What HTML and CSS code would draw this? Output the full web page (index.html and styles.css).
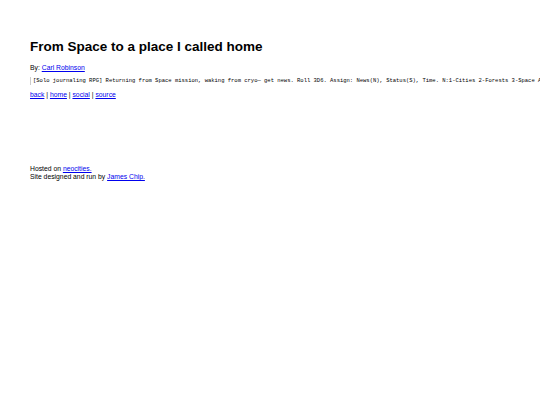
FILE: index.html
```html
<!DOCTYPE html>
<html>
<head>
<meta charset="utf-8">
<link rel="stylesheet" href="styles.css">
</head>
<body>
<main class="page">
  <h1 class="title">From Space to a place I called home</h1>
  <p class="byline">By: <a href="#">Carl Robinson</a></p>
  <pre class="desc">[Solo journaling RPG] Returning from Space mission, waking from cryo— get news. Roll 3D6. Assign: News(N), Status(S), Time. N:1-Cities 2-Forests 3-Space A</pre>
  <p class="nav"><a href="#">back</a> | <a href="#">home</a> | <a href="#">social</a> | <a href="#">source</a></p>
  <footer class="foot">
    Hosted on <a href="#">neocities.</a><br>
    Site designed and run by <a href="#">James Chip.</a>
  </footer>
</main>
</body>
</html>
```
FILE: styles.css
```css
html, body { margin: 0; padding: 0; background: #fff; }
body { font-family: "Liberation Sans", Arial, sans-serif; color: #000; overflow: hidden; }
.page { padding: 38px 0 0 30px; width: 510px; overflow: hidden; }
.title { font-size: 13.5px; font-weight: bold; margin: 0 0 7px 0; line-height: 18px; }
.byline { font-size: 6.8px; margin: 0 0 5px 0; line-height: 9px; }
.desc { font-family: "Liberation Mono", "Courier New", monospace; font-size: 5.5px; margin: 0 0 5px 0; line-height: 8px; border-left: 1px solid #ccc; padding-left: 2px; white-space: pre; }
.nav { font-size: 6.8px; margin: 0; line-height: 9px; }
a { color: #0000ee; }
.foot { font-size: 6.8px; line-height: 8px; margin-top: 66px; }
```
